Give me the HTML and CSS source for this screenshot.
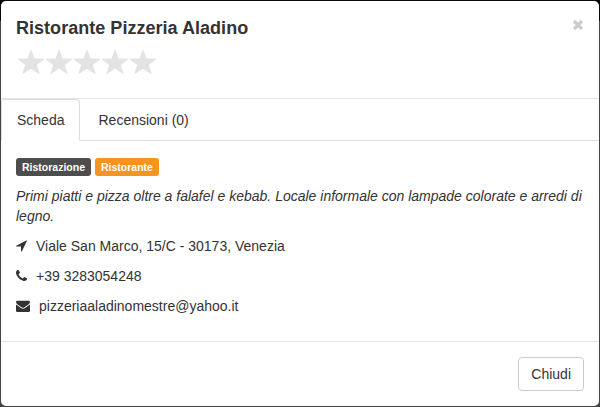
FILE: index.html
```html
<!DOCTYPE html>
<html lang="it">
<head>
<meta charset="utf-8">
<title>Ristorante Pizzeria Aladino</title>
<link rel="stylesheet" href="styles.css">
</head>
<body>
<div class="modal">
  <header class="modal-header">
    <div>
      <h4 class="title">Ristorante Pizzeria Aladino</h4>
      <svg class="stars" width="141" height="26" viewBox="0 0 141 26">
        <defs><path id="star" d="M14 0L17.5 9.5L28 9.7L19.8 15.9L22.9 25.5L14 19.8L5.1 25.5L8.2 15.9L0 9.7L10.5 9.5Z"/></defs>
        <use href="#star"/><use href="#star" x="28"/><use href="#star" x="56"/><use href="#star" x="84"/><use href="#star" x="112"/>
      </svg>
    </div>
    <button class="close" aria-label="Chiudi"><svg width="12" height="12" viewBox="0 0 12 12"><path d="M2 2L10 10M10 2L2 10"/></svg></button>
  </header>
  <nav class="tabs">
    <a class="tab active">Scheda</a>
    <a class="tab">Recensioni (0)</a>
  </nav>
  <main class="modal-body">
    <div class="labels"><span class="label dark">Ristorazione</span><span class="label orange">Ristorante</span></div>
    <p class="description">Primi piatti e pizza oltre a falafel e kebab. Locale informale con lampade colorate e arredi di legno.</p>
    <p class="contact"><svg class="icon" width="11" height="14" viewBox="0 0 11 14"><path d="M10.9 2L5.9 12.2Q5.7 12.6 5.3 12.5Q5 12.4 5 12V7.6H.5Q.1 7.5 0 7.2Q0 6.9 .3 6.7L10.3 1.6Q10.6 1.4 10.9 1.6Q11 1.8 10.9 2Z"/></svg>Viale San Marco, 15/C - 30173, Venezia</p>
    <p class="contact"><svg class="icon" width="11" height="14" viewBox="0 0 1408 1792"><path d="M1408 1240q0 27-10 70.500t-21 68.500q-21 50-122 106-94 51-186 51-27 0-52.500-3.500t-57.500-12.500-47.500-14.500-55.500-20.500-49-18q-98-35-175-83-128-79-264.500-215.500t-215.500-264.500q-48-77-83-175-3-9-18-49t-20.500-55.500-14.500-47.500-12.500-57.500-3.500-52.500q0-92 51-186 56-101 106-122 25-11 68.500-21t70.500-10q14 0 21 3 18 6 53 76 11 19 30 54t35 63.500 31 53.500q3 4 17.500 25t21.500 35.500 7 28.500q0 20-28.500 50t-62 55-62 53-28.500 46q0 9 5 22.500t8.500 20.500 14 24 11.500 19q76 137 174 235t235 174q2 1 19 11.500t24 14 20.500 8.500 22.500 5q18 0 46-28.500t53-62 55-62 50-28.500q14 0 28.500 7t35.500 21.500 25 17.500q25 15 53.500 31t63.500 35 54 30q70 35 76 53 3 7 3 21z"/></svg>+39 3283054248</p>
    <p class="contact"><svg class="icon" width="14" height="14" viewBox="0 0 14 14"><path d="M0 3Q0 1.8 1.3 1.8H12.7Q14 1.8 14 3Q14 4.3 12.5 5.4L8.5 8.2Q7 9.2 5.5 8.2L1.5 5.4Q0 4.3 0 3ZM0 5.5L5 9.1Q7 10.4 9 9.1L14 5.5V11.7Q14 13 12.7 13H1.3Q0 13 0 11.7Z"/></svg>pizzeriaaladinomestre@yahoo.it</p>
  </main>
  <footer class="modal-footer"><button class="btn">Chiudi</button></footer>
</div>
</body>
</html>
```
FILE: styles.css
```css
* { box-sizing: border-box; }
body {
  margin: 0;
  height: 407px;
  padding: 1px;
  overflow: hidden;
  background: linear-gradient(#080808 21px, #444 21px);
  font: 14px/20px "Liberation Sans", Arial, sans-serif;
  color: #333;
}
.modal {
  display: flex;
  flex-direction: column;
  height: 405px;
  background: #fff;
  border-radius: 5px;
  overflow: hidden;
}
.modal-header {
  display: flex;
  justify-content: space-between;
  align-items: flex-start;
  height: 98px;
  padding: 15px 15px 0;
  border-bottom: 1px solid #e5e5e5;
}
.title { margin: 0; font-size: 18px; line-height: 25px; font-weight: bold; letter-spacing: .03px; }
.stars { display: block; margin: 7.5px 0 0 1px; fill: #e3e3e3; }
.close { margin: 3px 0 0; padding: 0; border: 0; background: none; line-height: 0; }
.close path { stroke: #ccc; stroke-width: 3.2; }
.tabs { display: flex; gap: 2px; height: 42px; border-bottom: 1px solid #ddd; }
.tab { height: 42px; padding: 10px 15px; border: 1px solid transparent; border-radius: 4px 4px 0 0; }
.tab.active { background: #fff; border-color: #ddd #ddd #fff; }
.modal-body { flex: 1; padding: 17px 15px 0; }
.labels { display: flex; gap: 4px; margin-bottom: 10px; }
.label { height: 18px; padding: 0 6px; border-radius: 3px; color: #fff; font-size: 10.5px; line-height: 18px; font-weight: bold; }
.dark { background: #4d4d4d; }
.orange { background: #f7931e; }
.description { margin: 0 0 10px; font-style: italic; }
.contact { display: flex; align-items: center; margin: 0 0 10px; }
.icon { margin-right: 9px; fill: #333; }
.modal-footer { display: flex; justify-content: flex-end; height: 65px; padding: 15px; border-top: 1px solid #e5e5e5; }
.btn { height: 34px; padding: 6px 12px; border: 1px solid #ccc; border-radius: 4px; background: #fff; color: #333; font: inherit; }
```
